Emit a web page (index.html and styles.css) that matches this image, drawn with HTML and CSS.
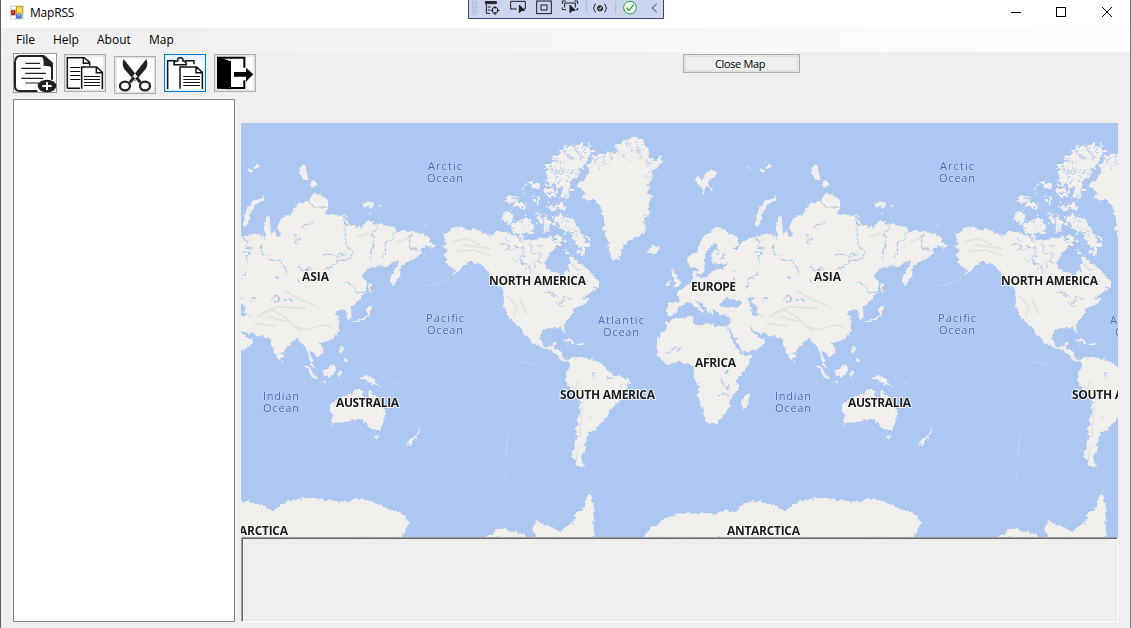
FILE: index.html
```html
<!DOCTYPE html>
<html lang="en">
<head>
<meta charset="utf-8">
<title>MapRSS</title>
<link rel="stylesheet" href="styles.css">
</head>
<body>
<div class="window">
  <header class="titlebar">
    <svg class="app-icon" viewBox="30 14 42 44"><rect x="31" y="15" width="40" height="42" fill="#c9cdd2"/><rect x="34" y="18" width="13" height="9" fill="#fff"/><rect x="33" y="29" width="13" height="15" fill="#b7231b"/><rect x="36" y="32" width="5" height="5" fill="#e8695b"/><rect x="48" y="17" width="21" height="22" fill="#d79b16"/><rect x="51" y="20" width="15" height="16" fill="#ffdc5e"/><rect x="34" y="46" width="12" height="9" fill="#fff"/><rect x="48" y="41" width="17" height="13" fill="#3f78d0"/><rect x="51" y="43" width="10" height="5" fill="#86b2f2"/></svg>
    <span class="app-title">MapRSS</span>
    <div class="caption">
      <svg class="cap" viewBox="0 0 12 12"><path d="M1 6.5H11"/></svg>
      <svg class="cap" viewBox="0 0 12 12"><rect x="1.5" y="1.5" width="9" height="9"/></svg>
      <svg class="cap" viewBox="0 0 12 12"><path d="M1 1L11 11M11 1L1 11"/></svg>
    </div>
    <svg class="debugbar" viewBox="24 0 588 57">
      <rect x="24" y="-3" width="588" height="60" fill="#ccd5f0"/><path d="M25.500-3V55.500H610.500V-3" fill="none" stroke="#3b4678" stroke-width="3"/>
      <path d="M38 3V45M44 6V45M50 3V45" stroke="#8993b8" stroke-width="2.500" stroke-dasharray="2.500 3.500"/>
      <g fill="none" stroke="#1f1f24" stroke-width="3">
        <path d="M76 5H109V11H76ZM79 12V40H90M83 21H92M83 30H90"/><path d="M76 7H109" stroke-width="5"/><circle cx="105" cy="31" r="9"/><path d="M105 18V26M105 36V45M92 31H100M110 31H119"/>
        <path d="M170 27H152V4H196V27H190"/><path d="M178 15V38L184 32L193 31Z" fill="#1f1f24"/>
        <rect x="230" y="3" width="44" height="38"/><rect x="243" y="15" width="18" height="15"/>
        <path d="M307 12V3H317M343 3H353V12M353 24V29H347M307 22V29H318M314 23V9H346V23"/><path d="M330 15V38L336 32L345 31Z" fill="#1f1f24"/>
      </g>
      <path d="M380 4V41M467 4V41" stroke="#9ba5c7" stroke-width="2"/>
      <g fill="none" stroke="#303036" stroke-width="3"><path d="M408 12Q403 12 403 18Q403 24 399 24Q403 24 403 31Q403 36 408 36M432 12Q437 12 437 18Q437 24 441 24Q437 24 437 31Q437 36 432 36"/><circle cx="420" cy="25" r="8" fill="#303036"/><path d="M416 25L419 28L425 20" stroke="#fff"/></g>
      <circle cx="510" cy="23" r="19" fill="#f3fff3" stroke="#279b35" stroke-width="3"/><path d="M500 23L507 31L521 14" fill="none" stroke="#279b35" stroke-width="4"/>
      <path d="M590 12L576 24L590 36" fill="none" stroke="#3d4672" stroke-width="3"/>
    </svg>
  </header>
  <nav class="menubar"><span class="m-file">File</span><span class="m-help">Help</span><span class="m-about">About</span><span class="m-map">Map</span></nav>
  <div class="toolrow">
    <div class="tools">
      <svg class="tool new" viewBox="39 159 132 120"><rect x="40.500" y="160.500" width="129" height="117" fill="#fff" stroke="#999" stroke-width="3"/><path d="M112 273H58Q45 273 45 259V188Q45 168 61 168H128L156 196V239" fill="none" stroke="#222" stroke-width="6"/><path d="M123 166H133L159 188V204Q147 196 130 197Q134 180 123 166" fill="#222"/><path d="M76 190H120M64 205H122M76 220H138M64 235H130M76 249H117" stroke="#222" stroke-width="3.500"/><ellipse cx="141" cy="258" rx="28" ry="19" fill="#222"/><path d="M127 258H155M141 246V270" stroke="#fff" stroke-width="6"/></svg>
      <svg class="tool copy" viewBox="192 162 126 114"><rect x="193.500" y="163.500" width="123" height="111" fill="#e4e4e4" stroke="#adadad" stroke-width="3"/><rect x="200" y="170" width="110" height="98" fill="#fff"/><path d="M202 266V173H253L269 187V197M250 175V190H268M204 265H240M245 266V201H290L307 217V267M289 203V218H306" fill="none" stroke="#111" stroke-width="4.500"/><path d="M210 202.500H241M210 214.500H241M210 226.500H241M210 238.500H241M252 229.500H300M252 238.500H300M252 247.500H300M252 256.500H300" fill="none" stroke="#111" stroke-width="3.500"/></svg>
      <svg class="tool cut" viewBox="342 168 126 114"><rect x="343.500" y="169.500" width="123" height="111" fill="#e4e4e4" stroke="#adadad" stroke-width="3"/><rect x="350" y="176" width="110" height="98" fill="#fff"/><path d="M371 177Q362 199 380 215L403 242L414 232ZM439 177Q448 199 430 215L407 242L396 232Z" fill="#222"/><path d="M402 232L390 247M409 232L421 247" stroke="#222" stroke-width="9"/><ellipse cx="375" cy="258" rx="15" ry="13" fill="#fff" stroke="#222" stroke-width="7"/><ellipse cx="435" cy="258" rx="15" ry="13" fill="#fff" stroke="#222" stroke-width="7"/><circle cx="405" cy="226" r="3" fill="#fff"/></svg>
      <svg class="tool paste" viewBox="492 162 126 114"><rect x="493.500" y="163.500" width="123" height="111" fill="#e5f1fb" stroke="#0078d7" stroke-width="3"/><rect x="500" y="170" width="110" height="98" fill="#fff"/><rect x="500" y="170" width="110" height="12" fill="#e5f1fb"/><path d="M503 267V182H526M556 182H582V193M522 194V187Q523 183 533 183Q532 173 541 173Q550 173 549 183Q559 183 559 194ZM540 266V201H590L607 217V267M588 203V218H606" fill="none" stroke="#111" stroke-width="4.500"/><path d="M550 229.500H600M550 238.500H600M550 247.500H600M550 256.500H600" fill="none" stroke="#111" stroke-width="3.500"/></svg>
      <svg class="tool exit" viewBox="642 162 126 114"><rect x="643.500" y="163.500" width="123" height="111" fill="#e4e4e4" stroke="#adadad" stroke-width="3"/><rect x="650" y="170" width="110" height="98" fill="#fff"/><path d="M651 170L693 184V268L651 266Z"/><path d="M652 173H733V203M733 241V264H692" fill="none" stroke="#000" stroke-width="6"/><path d="M702 216H738V203L760 223L738 245V230H702Z"/></svg>
    </div>
    <button class="close-map">Close Map</button>
  </div>
  <main class="workspace">
    <div class="feed"></div>
    <section class="view">
      <svg class="map" viewBox="241 123 877 414">
        <defs>
          <filter id="coast" filterUnits="userSpaceOnUse" x="425" y="120" width="535" height="420"><feTurbulence type="fractalNoise" baseFrequency="0.22" numOctaves="2" seed="7" result="n"/><feDisplacementMap in="SourceGraphic" in2="n" scale="6" xChannelSelector="R" yChannelSelector="G"/></filter>
          <filter id="fjords" filterUnits="userSpaceOnUse" x="480" y="120" width="180" height="150"><feTurbulence type="fractalNoise" baseFrequency="0.25" numOctaves="3" seed="12" result="n"/><feDisplacementMap in="SourceGraphic" in2="n" scale="14" xChannelSelector="R" yChannelSelector="G"/></filter>
          <filter id="soft" filterUnits="userSpaceOnUse" x="425" y="120" width="535" height="420"><feGaussianBlur stdDeviation="0.7"/></filter>
          <g id="world">
            <g class="land" filter="url(#coast)">
              <g transform="translate(430 120) scale(.33333)">
                <path d="M38 345L60 335L62 325L90 320L135 330L165 340L178 348L205 332L222 338L245 342L262 355L300 362L325 358L345 355L360 346L368 362L395 372L378 382L365 395L352 410L345 430L350 445L370 455L385 462L392 478L400 470L405 455L415 452L418 412L432 415L440 428L455 435L470 445L480 455L492 470L508 488L505 502L485 500L500 510L480 518L455 535L475 535L470 550L450 558L430 565L428 580L408 605L400 617L408 640L402 638L390 623L365 622L340 630L330 645L334 670L348 682L364 676L374 662L377 666L374 685L392 692L394 706L403 718L418 720L412 725L398 720L385 708L365 692L335 682L310 672L295 655L262 615L245 600L232 590L222 560L220 510L205 500L190 480L175 455L160 440L140 430L120 425L100 435L85 455L60 470L80 450L60 440L45 430L48 415L40 400L52 390L38 382L50 370L40 355Z"/>
                <path d="M440 195L470 170L478 140L490 110L505 100L520 105L535 95L550 100L565 92L555 75L590 60L615 50L640 58L645 75L655 95L660 115L680 120L690 108L697 125L680 145L665 150L670 175L660 190L652 215L665 230L655 260L660 280L645 300L650 330L625 350L600 358L582 375L572 395L565 415L548 422L538 400L535 370L520 320L525 300L505 250L495 240L470 240L455 235L465 215L450 205Z"/>
                <path d="M655 390L668 375L690 378L685 395L665 403Z"/>
                <path d="M418 720L425 712L445 716L460 708L480 718L500 722L520 735L530 745L540 760L565 768L598 780L600 792L585 805L578 825L572 845L555 855L540 865L535 885L520 905L505 912L500 930L480 935L470 960L462 975L465 995L455 1005L455 1020L458 1032L466 1038L450 1042L435 1032L428 1015L425 995L435 985L432 970L442 950L438 925L445 900L450 845L435 825L420 805L405 785L412 750L420 740ZM398 655L418 658L440 670L425 668L400 659ZM440 670L460 670L460 675L445 676Z"/>
                <path d="M165 1253L205 1225L240 1232L280 1240L285 1253ZM315 1253L308 1212L320 1205L345 1212L385 1232L410 1218L440 1200L428 1185L455 1170L465 1145L480 1118L491 1145L490 1253Z"/>
              </g>
              <g transform="translate(640 120) scale(.33333)">
                <path d="M82 550L118 547L118 530L105 520L120 512L155 485L158 450L172 450L170 470L190 475L210 462L225 448L250 445L265 430L240 432L215 430L215 400L235 385L290 388L300 370L330 355L350 350L385 340L410 350L415 370L408 320L412 295L425 290L430 350L440 330L450 355L460 345L445 320L465 290L490 285L495 265L510 250L545 240L560 215L575 225L600 240L600 260L590 280L620 285L654 290L669 318L699 320L724 300L739 310L799 322L804 335L829 330L854 335L879 340L899 350L914 370L926 378L914 388L894 375L879 385L882 400L864 415L839 425L822 435L814 455L812 475L792 498L786 475L799 450L814 425L809 418L789 430L769 440L734 440L714 450L702 470L719 480L716 505L706 525L689 545L669 565L671 590L659 600L654 575L634 570L622 575L634 605L636 620L629 645L609 660L574 670L586 685L586 700L569 712L559 700L546 690L549 720L564 745L552 740L542 715L539 695L524 675L512 655L494 665L469 690L459 720L449 718L436 685L429 660L419 655L399 648L364 642L345 636L330 620L335 636L352 650L375 655L365 680L345 690L305 698L300 680L285 655L266 622L262 626L275 655L290 685L305 705L335 708L325 735L300 765L290 785L292 810L270 840L270 865L250 885L235 908L205 913L195 895L190 870L172 825L178 800L160 770L162 740L145 735L120 725L80 733L55 710L48 690L52 655L75 630L80 607L95 600L150 588L160 590L158 606L190 618L200 608L230 618L262 620L272 610L270 588L240 585L235 574L222 570L217 587L207 577L195 560L180 546L165 540L175 555L190 570L185 582L165 560L150 545L130 552L118 560L108 582L85 588L80 570Z"/>
                <path d="M140 410L165 400L178 375L190 350L210 335L240 320L260 335L290 350L295 375L275 386L240 390L225 370L210 380L195 410L195 440L185 465L175 465L172 440L147 443ZM95 465L100 445L108 465L122 490L115 502L98 505L105 485ZM78 495L90 480L93 492L80 500ZM345 318L345 300L355 270L375 245L410 228L408 240L380 255L365 285L358 315ZM168 170L178 168L184 180L200 155L232 155L230 170L210 175L205 190L218 210L208 208L200 195L190 225L180 200L172 190ZM512 155L520 135L535 140L545 180L525 175ZM545 190L560 180L568 198L550 200ZM706 248L720 243L738 248L736 260L708 260ZM748 256L760 256L758 264ZM722 280L732 282L728 292ZM885 312L895 312L892 318ZM375 142L395 133L392 146L382 146ZM360 150L372 146L372 158ZM320 145L335 142L332 150ZM305 840L325 815L332 820L318 865L308 865Z"/>
                <path d="M719 492L727 494L731 520L724 512ZM669 603L694 598L714 590L720 565L734 545L728 575L715 596L685 607ZM640 678L648 680L646 700L638 698ZM646 715L658 718L655 728L646 724ZM529 732L540 735L569 778L560 778L542 758ZM574 783L600 787L590 790ZM584 750L609 740L622 728L619 760L604 772L589 765ZM630 754L644 750L633 776ZM696 770L714 765L734 775L744 785L759 798L724 790L715 780ZM461 718L468 722L464 730ZM606 862L614 845L644 830L669 825L679 810L704 810L702 830L719 838L724 805L736 825L754 845L772 870L769 900L756 930L729 930L714 910L694 898L674 898L649 905L614 913L612 890ZM737 945L752 945L744 962ZM834 975L854 950L864 945L874 930L869 918L878 928L869 945L846 978Z"/>
                <path d="M10 1253L25 1230L50 1215L75 1195L115 1180L235 1180L260 1168L285 1175L310 1150L350 1140L400 1155L435 1175L450 1160L480 1142L525 1138L530 1130L560 1135L589 1140L654 1145L684 1135L739 1145L774 1165L814 1175L846 1205L834 1230L819 1253Z"/>
              </g>
            </g>
            <g class="land" filter="url(#fjords)">
              <path transform="translate(431 121) scale(.33333)" d="M345 135L365 125L375 105L400 85L430 70L465 72L485 90L480 110L455 140L440 155L430 175L415 185L420 215L400 235L390 225L395 205L375 195L355 190L345 170ZM255 300L285 290L305 305L310 325L290 340L265 345L240 320ZM215 280L235 268L250 285L235 305L220 312ZM370 285L385 275L400 290L410 280L430 300L440 320L455 335L465 355L480 370L465 380L465 400L440 395L445 375L430 365L425 345L405 325L385 320L370 305ZM225 238L248 220L255 235L290 255L270 264L250 250ZM268 208L285 192L285 210ZM298 182L330 190L320 206L305 203ZM308 232L330 225L325 247ZM340 210L375 207L372 230L348 226ZM350 252L405 248L403 264L358 267ZM318 280L332 275L332 304L318 308ZM338 290L355 298L354 330L340 337ZM375 342L398 350L390 372L375 365ZM398 382L415 385L405 395Z"/>
            </g>
            <g filter="url(#fjords)">
              <path class="inlet" transform="translate(431 121) scale(.33333)" d="M375 115L405 130M398 92L425 118M432 80L445 105M462 82L450 112M355 150L400 150M410 165L425 140M365 175L395 182M270 300L285 325M395 290L410 315M430 320L440 350M490 110L505 140M512 105L525 135M535 98L545 125M565 92L590 115M590 65L605 105M620 60L622 95M640 80L620 110M660 120L640 135M665 150L645 165M645 275L640 300L650 325M660 285L648 290"/>
            </g>
            <g filter="url(#coast)">
              <g transform="translate(640 120) scale(.33333)">
                <path class="sea" d="M238 558L250 540L265 530L277 540L295 540L303 553L288 564L260 563ZM322 532L340 532L337 545L350 560L352 586L337 588L332 562ZM256 750L267 750L263 763L255 762ZM370 530L382 535L372 543Z"/>
                <path class="river" d="M400 372L402 400L425 418L455 425L482 455L465 475M654 295L650 340L655 378L675 398L665 415L635 422L610 440L585 450M650 485L680 500L685 520L712 515L718 500M585 405L600 402L625 410L655 398M745 318L735 345L738 370L725 415M800 340L792 360L768 370L775 385L765 410M850 340L840 385L870 388M345 355L360 365L352 385L370 385L355 410L360 430M355 455L340 470L320 480L325 500L310 515M495 350L505 345L515 355L500 362L512 370M540 240L545 255L560 260L595 262M520 325L535 315L555 308M430 540L440 530L455 530L450 545L435 548M465 545L480 535L492 540M230 835L245 820L265 825M82 700L95 690L110 682L122 686L105 695M510 445L525 450L550 445M210 395L218 425M235 385L232 405M250 400L245 420M242 775L248 795L253 800M263 795L268 813M345 395L370 400M270 450L285 455M280 475L290 480M440 475L455 472M510 475L515 490M365 540L375 548"/>
              </g>
              <path class="river" transform="translate(430 120) scale(.33333)" d="M210 375L225 372L240 378L238 388L222 388M225 350L235 365M245 395L255 380L278 380L285 410L270 412L275 430L290 432M250 415L265 428M300 370L305 395L330 400L325 425L345 430M285 445L300 440L300 465M310 430L315 445M320 370L328 382L340 380M270 355L275 368M345 515L370 525L380 532M375 545L385 555L392 545L405 548L400 530L410 530L425 540M380 550L400 560M430 430L438 450L450 450M420 480L432 490M445 465L455 480M485 760L500 762M495 762L490 775M530 773L550 775M568 796L575 800M478 892L486 893"/>
            </g>
            <g filter="url(#soft)">
              <path class="relief" transform="translate(640 120) scale(.33333)" d="M390 590L430 570L470 590L500 620L540 630L580 615L610 620M400 580L450 560L530 565M420 590L480 605L520 635M475 515L520 540L570 560M380 610L440 618M345 575L370 590M690 350L720 340M810 365L850 350"/>
              <path class="relief" transform="translate(430 120) scale(.33333)" d="M70 365L110 355L150 375M80 395L130 390L180 405M100 375L180 385M235 530L260 560L250 590M270 535L290 580M445 780L430 820M455 860L450 950M445 980L440 1020"/>
            </g>
            <path class="isles" transform="translate(430 120) scale(.33333)" d="M60 470L48 482L20 492L-10 497M262 723L315 736M232 945L228 1015M227 1045V1080M480 1118L500 1095M350 820L370 830M-130 780L-100 792M-125 380L-105 385"/>
          </g>
          <g id="labels">
            <g class="continent"><text x="489" y="285" textLength="97">NORTH AMERICA</text><text x="560" y="399" textLength="95">SOUTH AMERICA</text><text x="691" y="291" textLength="45">EUROPE</text><text x="814" y="281" textLength="27">ASIA</text><text x="695" y="367" textLength="41">AFRICA</text><text x="848" y="407" textLength="63">AUSTRALIA</text><text x="727" y="535" textLength="73">ANTARCTICA</text></g>
            <g class="ocean"><text x="940" y="170" textLength="34">Arctic</text><text x="939" y="182" textLength="36">Ocean</text><text x="938" y="322" textLength="38">Pacific</text><text x="939" y="334" textLength="36">Ocean</text><text x="598" y="324" textLength="46">Atlantic</text><text x="603" y="336" textLength="36">Ocean</text><text x="775" y="400" textLength="36">Indian</text><text x="775" y="412" textLength="36">Ocean</text></g>
          </g>
        </defs>
        <rect class="sea" x="241" y="123" width="877" height="414"/>
        <use href="#world"/><use href="#world" x="-512"/><use href="#world" x="512"/>
        <use href="#labels"/><use href="#labels" x="-512"/><use href="#labels" x="512"/>
      </svg>
      <div class="details"></div>
    </section>
  </main>
</div>
</body>
</html>
```
FILE: styles.css
```css
* { box-sizing: border-box; }
body { margin: 0; font-family: "Open Sans", "Noto Sans", sans-serif; font-size: 12px; color: #000; }
.window { width: 1131px; height: 628px; display: flex; flex-direction: column; background: #efefef; border-left: 1px solid #5f5f5f; border-right: 1px solid #777; overflow: hidden; }
.titlebar { position: relative; height: 28px; background: #fff; display: flex; align-items: flex-start; padding: 5px 17px 0 9px; }
.app-icon { width: 14px; height: 15px; }
.app-title { margin-left: 6px; line-height: 16px; font-size: 12px; letter-spacing: -0.2px; }
.caption { margin-left: auto; display: flex; gap: 34px; padding-top: 1px; }
.caption .cap:first-child { margin-right: -1px; }
.cap { width: 12px; height: 12px; fill: none; stroke: #000; stroke-width: 1; }
.debugbar { position: absolute; left: 467px; top: 0; width: 196px; height: 19px; }
.menubar { height: 24px; display: flex; align-items: center; padding-left: 15px; background: linear-gradient(90deg, #f0f0f0 15%, #fdfdfd 92%); line-height: 24px; }
.menubar span { white-space: nowrap; }
.m-file { width: 37px; }
.m-help { width: 44px; }
.m-about { width: 52px; }
.m-map { width: 30px; }
.toolrow { height: 47px; display: flex; align-items: flex-start; padding-left: 12px; }
.tools { display: flex; align-items: flex-start; gap: 8px; width: 670px; }
.tool { display: block; flex: none; width: 42px; height: 38px; margin-top: 2px; }
.tool.new { width: 44px; height: 40px; margin: 1px -1px 0 0; }
.tool.cut { margin-top: 4px; }
.close-map { width: 117px; height: 19px; margin-top: 2px; padding: 0 3px 0 0; border: 1px solid #adadad; background: #efefef; box-shadow: inset 0 0 0 2px #e1e1e1; font: 11px/15px "Open Sans", sans-serif; letter-spacing: -0.35px; color: #000; }
.workspace { display: flex; gap: 6px; padding-left: 12px; }
.feed { width: 222px; height: 523px; background: #fff; border: 1px solid #828790; }
.view { width: 877px; padding-top: 24px; display: flex; flex-direction: column; }
.map { display: block; width: 877px; height: 414px; overflow: hidden; }
.sea { fill: #abc7f2; }
.land { fill: #f0efec; }
.river { fill: none; stroke: #a9c2ea; stroke-width: 3; stroke-linejoin: round; }
.inlet { fill: none; stroke: #b9cff2; stroke-width: 4; }
.relief { fill: none; stroke: #dcdedb; stroke-width: 5; stroke-linecap: round; opacity: .75; }
.isles { fill: none; stroke: #cfdef4; stroke-width: 2; }
.continent { font: bold 12px "Open Sans", "Noto Sans", sans-serif; fill: #1b1b1b; stroke: #fff; stroke-opacity: .75; stroke-width: 2px; paint-order: stroke; }
.ocean { font: 500 11px "Open Sans", "Noto Sans", sans-serif; fill: #4769b5; stroke: #c3d7f7; stroke-width: 1.2px; paint-order: stroke; }
.details { height: 85px; background: #efefef; border: 1px solid; border-color: #a0a0a0 #fff #fff #a0a0a0; box-shadow: inset 1px 1px 0 #696969, inset -1px -1px 0 #e3e3e3; }
```
